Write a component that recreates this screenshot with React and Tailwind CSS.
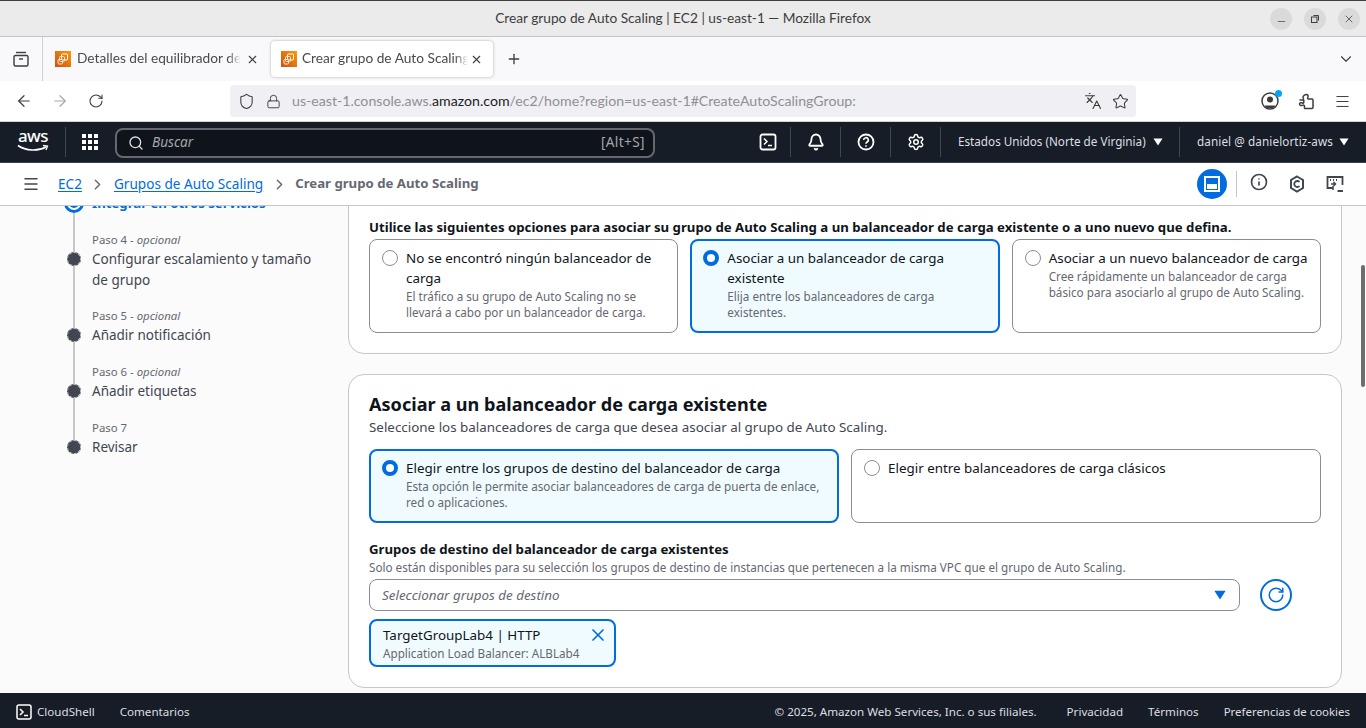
import { ArrowLeft, ArrowRight, RotateCw, Shield, Lock, Star, Languages, Menu, Plus, X, ChevronDown, ChevronRight, Search, Bell, Settings, Info, Minus } from 'lucide-react'

const chromeFont = "font-['Lato','Noto_Sans',sans-serif]"
const tabFade = '[mask-image:linear-gradient(to_right,black_92%,transparent)]'

function Favicon() {
  return (
    <svg width="16" height="16" viewBox="0 0 16 16" className="shrink-0">
      <defs>
        <linearGradient id="fav" x1="0" y1="1" x2="1" y2="0">
          <stop offset="0" stopColor="#c8511b" />
          <stop offset="1" stopColor="#ff9900" />
        </linearGradient>
      </defs>
      <rect width="16" height="16" fill="url(#fav)" />
      <rect x="6.5" y="3" width="6" height="6" rx="1" fill="none" stroke="#fff" strokeWidth="1" />
      <rect x="4.5" y="5.5" width="5" height="5" rx="1" fill="none" stroke="#ffe8d0" strokeWidth="1" />
      <rect x="3" y="8.5" width="4.5" height="4.5" rx="1" fill="none" stroke="#ffe8d0" strokeWidth="1" />
    </svg>
  )
}

function TitleBar() {
  return (
    <div className={`h-[37px] shrink-0 bg-[#ebebeb] border-t border-t-[#3d3d3d] border-b border-b-[#c4c4c4] flex items-center relative ${chromeFont}`}>
      <div className="flex-1 text-center text-[13.7px] text-[#3d3d3d]">Crear grupo de Auto Scaling | EC2 | us-east-1 — Mozilla Firefox</div>
      <div className="absolute right-[6px] top-[7px] flex gap-[12px]">
        <div className="w-[22px] h-[22px] rounded-full bg-[#dadada] grid place-items-center"><Minus size={11} strokeWidth={1.5} className="text-[#3d3d3d] translate-y-[2px]" /></div>
        <div className="w-[22px] h-[22px] rounded-full bg-[#dadada] grid place-items-center">
          <svg width="10" height="10" viewBox="0 0 10 10" fill="none" stroke="#3d3d3d"><rect x="1.5" y="3" width="5.5" height="5.5" /><path d="M3.5 1.5h5v5" /></svg>
        </div>
        <div className="w-[22px] h-[22px] rounded-full bg-[#dadada] grid place-items-center"><X size={12} strokeWidth={1.5} className="text-[#3d3d3d]" /></div>
      </div>
    </div>
  )
}

function TabBar() {
  return (
    <div className={`h-[44px] shrink-0 bg-[#f9f9fb] flex items-center text-[13.7px] text-[#4a4a4f] ${chromeFont}`}>
      <div className="w-[43px] h-full border-r border-[#cfcfd8] grid place-items-center">
        <svg width="18" height="18" viewBox="0 0 18 18" fill="none" stroke="#3d3d3d" strokeWidth="1.4">
          <path d="M4 2.5h10" /><rect x="2" y="5.5" width="14" height="10.5" rx="1.5" /><path d="M7 9h4" />
        </svg>
      </div>
      <div className="w-[228px] h-[36px] pl-[12px] flex items-center">
        <Favicon />
        <div className={`ml-[6px] w-[164px] whitespace-nowrap overflow-hidden -translate-y-[1px] ${tabFade}`}>Detalles del equilibrador de carga</div>
        <X size={13} className="ml-[5px] text-[#3d3d3d]" />
      </div>
      <div className="w-[222px] h-[36px] bg-white rounded-[4px] shadow-[0_0_3px_rgba(0,0,0,0.3)] pl-[10px] flex items-center">
        <Favicon />
        <div className={`ml-[5px] w-[166px] whitespace-nowrap overflow-hidden -translate-y-[1px] ${tabFade}`}>Crear grupo de Auto Scaling</div>
        <X size={13} className="ml-[2px] text-[#3d3d3d]" />
      </div>
      <Plus size={16} className="ml-[13px] text-[#3d3d3d]" />
      <ChevronDown size={18} strokeWidth={1.5} className="ml-auto mr-[11px] text-[#3d3d3d]" />
    </div>
  )
}

function UrlBar() {
  return (
    <div className={`h-[41px] shrink-0 bg-white border-b border-[#d4d4d8] flex items-center ${chromeFont}`}>
      <ArrowLeft size={18} strokeWidth={1.6} className="ml-[15px] text-[#3d3d3d]" />
      <ArrowRight size={18} strokeWidth={1.6} className="ml-[18px] text-[#a9a9ad]" />
      <RotateCw size={16} strokeWidth={1.6} className="ml-[19px] text-[#3d3d3d]" />
      <div className="ml-[126px] w-[906px] h-[32px] rounded-[4px] bg-[#f0f0f4] flex items-center text-[14.15px] text-[#8f8f94]">
        <Shield size={17} strokeWidth={1.5} className="ml-[8px] text-[#3d3d3d]" />
        <Lock size={15} strokeWidth={1.5} className="ml-[11px] text-[#3d3d3d]" />
        <div className="ml-[11px] whitespace-nowrap">us-east-1.console.aws.<span className="text-[#1c1b22]">amazon.com</span>/ec2/home?region=us-east-1#CreateAutoScalingGroup:</div>
        <Languages size={18} strokeWidth={1.5} className="ml-auto text-[#3d3d3d]" />
        <Star size={17} strokeWidth={1.5} className="ml-[10px] mr-[7px] text-[#3d3d3d]" />
      </div>
      <div className="ml-[125px] relative w-[18px] h-[18px]">
        <svg width="18" height="18" viewBox="0 0 18 18" fill="none">
          <circle cx="9" cy="9" r="8" stroke="#3d3d3d" strokeWidth="1.5" />
          <circle cx="9" cy="7.5" r="3" fill="#3d3d3d" />
          <path d="M4 13.5h10v1l-2 1.5H6l-2-1.5z" fill="#3d3d3d" />
        </svg>
        <div className="absolute -top-[2px] -right-[3px] w-[7px] h-[7px] rounded-full bg-[#00a6f5]" />
      </div>
      <svg width="17" height="18" viewBox="0 0 17 18" fill="none" stroke="#3d3d3d" strokeWidth="1.5" strokeLinejoin="round" className="ml-[19px]">
        <path d="M1.5 8h3.2c1 0 1-.8.6-1.5C4.5 5 5.5 3 8 2.5c2-.2 2.6 1.6 1.8 3-.4.8-.2 1.5.7 1.5h3.5a1 1 0 0 1 1 1v7.5a1 1 0 0 1-1 1H6.5v-2.2c0-1.3-1-1.6-1.9-1-1 .6-3.1.2-3.1-1.3 0-1.4 2-1.6 3-1 .7.4 1.3 0 1.3-.6V8" />
      </svg>
      <Menu size={17} strokeWidth={1.4} className="ml-[19px] text-[#3d3d3d]" />
    </div>
  )
}

function NavSep({ className = '' }) {
  return <div className={`w-px h-[30px] bg-[#424650] shrink-0 ${className}`} />
}

function Caret({ className = '' }) {
  return (
    <svg width="10" height="8" viewBox="0 0 10 8" className={className}>
      <path d="M0.5 0.5h9L5 7.5z" fill="currentColor" />
    </svg>
  )
}

function AwsNav() {
  return (
    <div className="h-[41px] shrink-0 bg-[#161d26] border-b border-[#3b4048] flex items-center text-[#dedee3] text-[11.7px]">
      <div className="ml-[17px] w-[32px] h-[30px] relative text-white">
        <div className="text-[17px] leading-[17px] font-medium tracking-[-0.5px] text-center">aws</div>
        <svg width="32" height="10" viewBox="0 0 32 10" className="absolute left-0 top-[17px]" fill="none">
          <path d="M1 1.5C9 7 21 7.5 29 3" stroke="#fff" strokeWidth="1.6" />
          <path d="M26 1.5l4.5.5-1.5 4" stroke="#fff" strokeWidth="1.3" />
        </svg>
      </div>
      <NavSep className="ml-[16px]" />
      <div className="ml-[16px] grid grid-cols-3 gap-[2px]">
        {[0, 1, 2, 3, 4, 5, 6, 7, 8].map(i => <div key={i} className="w-[4px] h-[4px] bg-white" />)}
      </div>
      <div className="ml-[17px] mt-[1px] w-[540px] h-[30px] rounded-[8px] border-2 border-[#656871] bg-[#0f141a] flex items-center pl-[11px] pr-[8px]">
        <Search size={16} strokeWidth={2} className="text-[#dedee3]" />
        <span className="ml-[8px] italic text-[13.6px] text-[#a4a7ad]">Buscar</span>
        <span className="ml-auto text-[13.6px] tracking-[0.4px] text-[#a4a7ad]">[Alt+S]</span>
      </div>
      <div className="w-[129px] shrink-0 flex justify-end pr-[4px]">
        <svg width="18" height="18" viewBox="0 0 18 18" fill="none" stroke="#fff" strokeWidth="1.8" className="mr-[3px]">
          <rect x="1.5" y="1.5" width="15" height="15" rx="2" />
          <path d="M5 5.5l3 3-3 3M9 12.5h4" strokeWidth="1.5" />
        </svg>
      </div>
      <NavSep className="ml-[6px]" />
      <div className="w-[49px] grid place-items-center"><Bell size={18} strokeWidth={2.4} className="text-white" /></div>
      <NavSep />
      <div className="w-[49px] grid place-items-center">
        <svg width="18" height="18" viewBox="0 0 18 18" fill="none" stroke="#fff" strokeWidth="1.8">
          <circle cx="9" cy="9" r="7.5" />
          <path d="M6.7 7a2.3 2.3 0 1 1 3.4 2c-.8.5-1.1.9-1.1 1.8" strokeWidth="1.6" />
          <path d="M9 12.3v1.4" strokeWidth="1.6" />
        </svg>
      </div>
      <NavSep />
      <div className="w-[49px] grid place-items-center"><Settings size={18} strokeWidth={2} className="text-white" /></div>
      <NavSep />
      <span className="ml-[17px] whitespace-nowrap w-[188px]">Estados Unidos (Norte de Virginia)</span>
      <Caret className="ml-[7px] text-white" />
      <NavSep className="ml-[16px]" />
      <span className="ml-[17px] whitespace-nowrap w-[137px] tracking-[0.1px]">daniel @ danielortiz-aws</span>
      <Caret className="ml-[5px] text-white" />
    </div>
  )
}

function Breadcrumbs() {
  return (
    <div className="h-[43px] shrink-0 bg-white border-b border-[#c6c6cd] flex items-center text-[13.6px]">
      <Menu size={18} strokeWidth={2} className="ml-[22px] text-[#424650]" />
      <a className="ml-[18px] text-[#006ce0] underline underline-offset-2">EC2</a>
      <ChevronRight size={17} strokeWidth={2} className="ml-[7px] text-[#656871]" />
      <a className="ml-[8px] text-[#006ce0] underline underline-offset-2">Grupos de Auto Scaling</a>
      <ChevronRight size={17} strokeWidth={2} className="ml-[8px] text-[#656871]" />
      <span className="ml-[7px] font-bold text-[13.2px] text-[#656871]">Crear grupo de Auto Scaling</span>
      <div className="ml-auto flex items-center">
        <div className="w-[30px] h-[30px] rounded-full bg-[#006ce0] grid place-items-center">
          <svg width="16" height="16" viewBox="0 0 16 16" fill="none" stroke="#fff" strokeWidth="2">
            <rect x="1" y="1" width="14" height="14" />
            <rect x="3" y="8" width="10" height="5" fill="#fff" stroke="none" />
          </svg>
        </div>
        <div className="ml-[9px] w-px h-[26px] bg-[#c6c6cd]" />
        <Info size={18} strokeWidth={2.2} className="ml-[13px] text-[#424650] -translate-y-[2px]" />
        <svg width="16" height="18" viewBox="0 0 16 18" fill="none" stroke="#424650" strokeWidth="2" className="ml-[21px]">
          <path d="M8 1.5l6 3.5v8l-6 3.5L2 13V5z" />
          <path d="M10.5 7a3 3 0 1 0 0 4" strokeWidth="1.8" />
        </svg>
        <svg width="18" height="18" viewBox="0 0 18 18" fill="none" stroke="#424650" strokeWidth="1.8" className="ml-[21px] mr-[22px]">
          <path d="M7 13H1.5V2h15v8" />
          <path d="M4 5h1M7 5h1M10 5h1" strokeWidth="2" />
          <path d="M5 9h4M7.5 7l2 2-2 2M7 11v4" strokeWidth="1.5" />
          <path d="M11.5 16H17" strokeWidth="2" />
        </svg>
      </div>
    </div>
  )
}

function Dot() {
  return <div className="w-[14px] h-[14px] rounded-full bg-[#424650] outline outline-1 outline-dashed outline-[#c6c6cd] -outline-offset-1 shrink-0" />
}

function Step({ label, optional, title, last, tall }) {
  return (
    <div className={`flex ${tall ? 'h-[76px]' : 'h-[56px]'}`}>
      <div className="w-[20px] flex flex-col items-center">
        <div className="w-[2px] h-[20px] bg-[#c6c6cd]" />
        <Dot />
        {!last && <div className="w-[2px] flex-1 bg-[#c6c6cd]" />}
      </div>
      <div className="ml-[8px] w-[232px]">
        <div className="text-[11.4px] leading-[16px] text-[#656871]">
          {label}
          {optional && <> - <i>opcional</i></>}
        </div>
        <div className="mt-[1px] text-[13.5px] leading-[21px] text-[#424650]">{title}</div>
      </div>
    </div>
  )
}

function Sidebar() {
  return (
    <div className="w-[348px] shrink-0 pl-[64px] -mt-[13px]">
      <div className="flex h-[39px]">
        <div className="w-[20px] flex flex-col items-center">
          <div className="w-[20px] h-[20px] rounded-full border-[3px] border-[#006ce0] bg-white grid place-items-center shrink-0">
            <div className="w-[10px] h-[10px] rounded-full bg-[#006ce0]" />
          </div>
          <div className="w-[2px] flex-1 bg-[#c6c6cd]" />
        </div>
        <div className="ml-[8px] text-[13.2px] leading-[20px] font-bold text-[#006ce0]">Integrar en otros servicios</div>
      </div>
      <Step tall label="Paso 4" optional title="Configurar escalamiento y tamaño de grupo" />
      <Step label="Paso 5" optional title="Añadir notificación" />
      <Step label="Paso 6" optional title="Añadir etiquetas" />
      <Step last label="Paso 7" title="Revisar" />
    </div>
  )
}

function Radio({ on }) {
  return on ? (
    <div className="w-[16px] h-[16px] rounded-full border-[4px] border-[#006ce0] bg-white shrink-0 mt-[2px]" />
  ) : (
    <div className="w-[16px] h-[16px] rounded-full border border-[#8c8c94] bg-white shrink-0 mt-[2px]" />
  )
}

function Option({ on, title, desc }) {
  return (
    <div className={`rounded-[8px] flex gap-[8px] ${on ? 'border-2 border-[#006ce0] bg-[#f0fbff] pl-[11px] pr-[11px] pt-[7px]' : 'border border-[#8c8c94] bg-white pl-[12px] pr-[12px] pt-[8px]'}`}>
      <Radio on={on} />
      <div className="min-w-0">
        <div className="text-[13.4px] leading-[20px] text-[#0f141a]">{title}</div>
        {desc && <div className="text-[11.7px] leading-[16px] text-[#656871]">{desc}</div>}
      </div>
    </div>
  )
}

function Main() {
  return (
    <div className="flex-1 min-w-0 mr-[24px] -mt-[20px]">
      <div className="h-[168px] rounded-[16px] border border-[#c6c6cd] bg-white px-[20px] pt-[30px]">
        <div className="text-[13.2px] leading-[20px] font-bold text-[#0f141a] whitespace-nowrap">Utilice las siguientes opciones para asociar su grupo de Auto Scaling a un balanceador de carga existente o a uno nuevo que defina.</div>
        <div className="mt-[2px] grid grid-cols-3 gap-[12px] h-[94px]">
          <Option title="No se encontró ningún balanceador de carga" desc="El tráfico a su grupo de Auto Scaling no se llevará a cabo por un balanceador de carga." />
          <Option on title="Asociar a un balanceador de carga existente" desc="Elija entre los balanceadores de carga existentes." />
          <Option title="Asociar a un nuevo balanceador de carga" desc="Cree rápidamente un balanceador de carga básico para asociarlo al grupo de Auto Scaling." />
        </div>
      </div>
      <div className="mt-[20px] h-[314px] rounded-[16px] border border-[#c6c6cd] bg-white px-[20px] pt-[16px]">
        <div className="text-[18.1px] leading-[26px] font-bold text-[#0f141a]">Asociar a un balanceador de carga existente</div>
        <div className="text-[13.4px] leading-[20px] text-[#424650]">Seleccione los balanceadores de carga que desea asociar al grupo de Auto Scaling.</div>
        <div className="mt-[12px] grid grid-cols-2 gap-[12px] h-[74px]">
          <Option on title="Elegir entre los grupos de destino del balanceador de carga" desc="Esta opción le permite asociar balanceadores de carga de puerta de enlace, red o aplicaciones." />
          <Option title="Elegir entre balanceadores de carga clásicos" />
        </div>
        <div className="mt-[16px] text-[13.2px] leading-[20px] font-bold text-[#0f141a]">Grupos de destino del balanceador de carga existentes</div>
        <div className="text-[11.7px] leading-[16px] h-[16px] text-[#656871]">Solo están disponibles para su selección los grupos de destino de instancias que pertenecen a la misma VPC que el grupo de Auto Scaling.</div>
        <div className="mt-[4px] flex items-center">
          <div className="w-[871px] h-[32px] rounded-[8px] border border-[#8c8c94] flex items-center pl-[12px] pr-[14px]">
            <span className="italic text-[13.4px] pt-[1px] text-[#656871]">Seleccionar grupos de destino</span>
            <Caret className="ml-auto text-[#006ce0] scale-125" />
          </div>
          <div className="ml-[20px] w-[32px] h-[32px] rounded-full border-2 border-[#006ce0] grid place-items-center">
            <RotateCw size={18} strokeWidth={2} className="text-[#006ce0]" />
          </div>
        </div>
        <div className="mt-[8px] w-[247px] h-[48px] rounded-[8px] border-2 border-[#006ce0] bg-[#f0fbff] flex pl-[12px] pr-[6px] pt-[4px]">
          <div>
            <div className="text-[13.4px] leading-[20px] text-[#0f141a]">TargetGroupLab4 | HTTP</div>
            <div className="text-[11.7px] leading-[16px] text-[#656871]">Application Load Balancer: ALBLab4</div>
          </div>
          <X size={20} strokeWidth={2} className="ml-auto text-[#006ce0]" />
        </div>
      </div>
    </div>
  )
}

function Footer() {
  return (
    <div className="h-[35px] shrink-0 bg-[#161d26] flex items-center pt-[2px] text-[11.6px] text-[#dedee3]">
      <svg width="16" height="16" viewBox="0 0 16 16" fill="none" stroke="#fff" strokeWidth="1.5" className="ml-[16px]">
        <rect x="1" y="1" width="14" height="14" rx="2" />
        <path d="M4 5l3 3-3 3M8 11.5h4" />
      </svg>
      <span className="ml-[5px]">CloudShell</span>
      <span className="ml-[25px]">Comentarios</span>
      <span className="ml-auto">© 2025, Amazon Web Services, Inc. o sus filiales.</span>
      <span className="ml-[30px]">Privacidad</span>
      <span className="ml-[25px]">Términos</span>
      <span className="ml-[25px] mr-[16px] text-[11.45px]">Preferencias de cookies</span>
    </div>
  )
}

export default function App() {
  return (
    <div className="h-[728px] w-[1366px] overflow-hidden flex flex-col bg-[#fbfbfb] font-['Noto_Sans',sans-serif]">
      <TitleBar />
      <TabBar />
      <UrlBar />
      <AwsNav />
      <Breadcrumbs />
      <div className="flex-1 min-h-0 overflow-hidden flex relative">
        <Sidebar />
        <Main />
        <div className="absolute right-[1px] top-[59px] w-[4px] h-[122px] rounded-full bg-[#6d6d6d]" />
      </div>
      <Footer />
    </div>
  )
}
